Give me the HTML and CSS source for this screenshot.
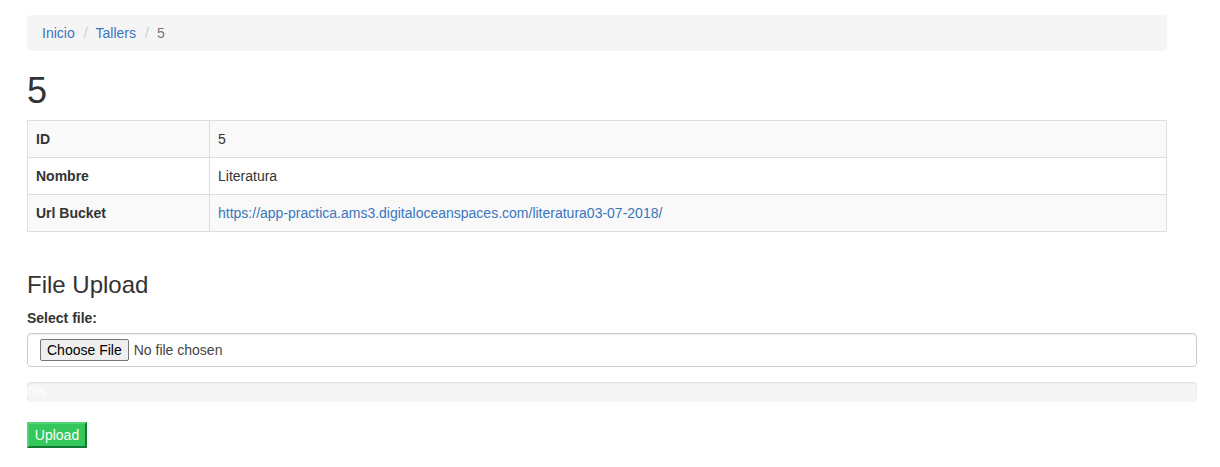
FILE: index.html
```html
<!DOCTYPE html>
<html lang="es">
<head>
<meta charset="utf-8">
<title>5</title>
<link rel="stylesheet" href="styles.css">
</head>
<body>
<div class="page">
  <div class="narrow">
    <ol class="breadcrumb">
      <li><a href="#">Inicio</a></li>
      <li class="sep">/</li>
      <li><a href="#">Tallers</a></li>
      <li class="sep">/</li>
      <li class="active">5</li>
    </ol>
    <h1 class="title">5</h1>
    <table class="details">
      <tr class="odd"><th>ID</th><td>5</td></tr>
      <tr><th>Nombre</th><td>Literatura</td></tr>
      <tr class="odd"><th>Url Bucket</th><td><a href="#">https://app-practica.ams3.digitaloceanspaces.com/literatura03-07-2018/</a></td></tr>
    </table>
  </div>
  <div class="wide">
    <h3 class="section">File Upload</h3>
    <label class="lbl">Select file:</label>
    <div class="file-box">
      <span class="choose">Choose File</span>
      <span class="nofile">No file chosen</span>
    </div>
    <div class="progress"><div class="progress-bar">0%</div></div>
    <button class="upload">Upload</button>
  </div>
</div>
</body>
</html>
```
FILE: styles.css
```css
* { box-sizing: border-box; }
body {
  margin: 0;
  font-family: "Liberation Sans", Arial, sans-serif;
  font-size: 14px;
  line-height: 20px;
  color: #333;
  background: #fff;
}
a { color: #3a76bd; text-decoration: none; }
.page { padding: 15px 0 0 27px; }
.narrow { width: 1140px; }
.wide { width: 1170px; }
.breadcrumb {
  list-style: none;
  margin: 0 0 20px;
  padding: 8px 15px;
  background: #f5f5f5;
  border-radius: 4px;
  display: flex;
  height: 36px;
}
.breadcrumb .sep { color: #ccc; padding: 0 8px 0 9px; }
.breadcrumb .active { color: #777; }
.title {
  font-size: 36px;
  font-weight: 500;
  line-height: 39px;
  margin: 20px 0 10px;
}
.details {
  width: 100%;
  border-collapse: collapse;
  border: 1px solid #ddd;
  margin-bottom: 20px;
}
.details th, .details td {
  border: 1px solid #ddd;
  padding: 8px;
  line-height: 20px;
  text-align: left;
  height: 37px;
}
.details th { width: 182px; font-weight: bold; }
.details tr.odd { background: #f9f9f9; }
.section {
  font-size: 24px;
  font-weight: 500;
  line-height: 26px;
  margin: 40px 0 10px;
}
.lbl {
  display: inline-block;
  font-weight: bold;
  margin-bottom: 5px;
}
.file-box {
  height: 34px;
  border: 1px solid #ccc;
  border-radius: 4px;
  box-shadow: inset 0 1px 1px rgba(0,0,0,.075);
  padding: 0 12px;
  display: flex;
  align-items: center;
  margin-bottom: 15px;
}
.choose {
  font-size: 14px;
  line-height: 16px;
  padding: 2px 6px;
  color: #000;
  background: #efefef;
  border: 1px solid #767676;
  border-radius: 2px;
  margin-right: 5px;
}
.nofile { color: #444; }
.progress {
  height: 20px;
  background: #f5f5f5;
  border-radius: 4px;
  box-shadow: inset 0 1px 2px rgba(0,0,0,.1);
  overflow: hidden;
  margin-bottom: 20px;
}
.progress-bar {
  width: 0;
  height: 20px;
  font-size: 13px;
  line-height: 20px;
  color: #fff;
  white-space: nowrap;
}
.upload {
  font-family: "Liberation Sans", Arial, sans-serif;
  font-size: 14px;
  line-height: 18px;
  height: 26px;
  width: 60px;
  padding: 0;
  color: #fff;
  background: #35c75b;
  border: 2px solid;
  border-color: #4fd673 #137a34 #137a34 #4fd673;
}
```
